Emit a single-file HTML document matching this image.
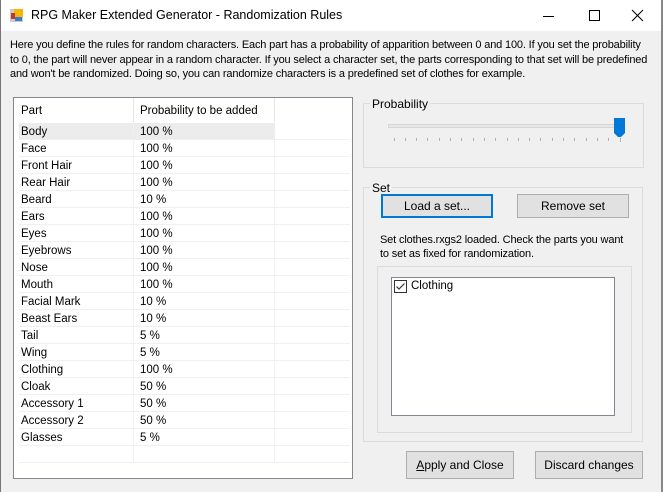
<!DOCTYPE html>
<html><head><meta charset="utf-8"><style>
*{margin:0;padding:0;box-sizing:border-box}
body{width:663px;height:492px;background:#f0f0f0;font-family:"Liberation Sans",sans-serif;font-size:11.5px;color:#000;position:relative;overflow:hidden}
.a{position:absolute}
.t{white-space:nowrap}
.btn{position:absolute;background:#e1e1e1;border:1px solid #adadad;text-align:center;font-size:12px}
.grp{position:absolute;border:1px solid #dcdcdc}
.gl{position:absolute;background:#f0f0f0;padding:0 2px;font-size:12px}
.row{position:absolute;left:19px;width:331px;height:17px;border-bottom:1px solid #f0f0f0}
.row span{position:absolute;top:3px}
</style></head><body>
<div class="a" style="left:0;top:0;width:663px;height:31px;background:#fff"></div>
<div class="a" style="left:0;top:0;width:1px;height:492px;background:#777"></div>
<div class="a" style="left:661px;top:0;width:2px;height:492px;background:#888"></div>
<svg class="a" style="left:10px;top:9px" width="13" height="13"><rect x="0" y="0" width="13" height="13" fill="#ccc"/><rect x="4" y="0" width="9" height="8" fill="#f5b800"/><rect x="1" y="4" width="4" height="6" fill="#c0392b"/><rect x="5" y="8" width="7" height="4" fill="#3a7bd5"/></svg>
<div class="a t" style="left:31px;top:8px;font-size:12.5px">RPG Maker Extended Generator - Randomization Rules</div>
<svg class="a" style="left:540px;top:9px" width="110" height="14"><line x1="3" y1="7.5" x2="14" y2="7.5" stroke="#000"/><rect x="49.5" y="1.5" width="10" height="10" fill="none" stroke="#000"/><line x1="92" y1="1" x2="103" y2="12" stroke="#000"/><line x1="103" y1="1" x2="92" y2="12" stroke="#000"/></svg>
<div class="a t" style="left:10px;top:38px;line-height:14.5px;font-size:11px;letter-spacing:-0.16px">Here you define the rules for random characters. Each part has a probability of apparition between 0 and 100. If you set the probability<br>to 0, the part will never appear in a random character. If you select a character set, the parts corresponding to that set will be predefined<br>and won't be randomized. Doing so, you can randomize characters is a predefined set of clothes for example.</div>

<div class="a" style="left:13px;top:97px;width:340px;height:382px;background:#fff;border:1px solid #828790"></div>
<div class="a t" style="left:21px;top:105px">Part</div>
<div class="a t" style="left:140px;top:105px">Probability to be added</div>
<div class="a" style="left:133px;top:98px;width:1px;height:24px;background:#e5e5e5"></div>
<div class="a" style="left:274px;top:98px;width:1px;height:24px;background:#e5e5e5"></div>
<div class="a" style="left:19px;top:123px;width:255px;height:16px;background:#ececec"></div>
<div id="rows"></div>
<div class="a" style="left:133px;top:123px;width:1px;height:339px;background:#f0f0f0"></div>
<div class="a" style="left:274px;top:123px;width:1px;height:339px;background:#f0f0f0"></div>
<script>
var d=[["Body","100 %"],["Face","100 %"],["Front Hair","100 %"],["Rear Hair","100 %"],["Beard","10 %"],["Ears","100 %"],["Eyes","100 %"],["Eyebrows","100 %"],["Nose","100 %"],["Mouth","100 %"],["Facial Mark","10 %"],["Beast Ears","10 %"],["Tail","5 %"],["Wing","5 %"],["Clothing","100 %"],["Cloak","50 %"],["Accessory 1","50 %"],["Accessory 2","50 %"],["Glasses","5 %"],["",""],["",""]];
var h="";for(var i=0;i<d.length;i++){h+='<div class="row" style="top:'+(123+17*i)+'px"><span style="left:2px">'+d[i][0]+'</span><span style="left:121px">'+d[i][1]+'</span></div>';}
document.getElementById("rows").innerHTML=h;
</script>

<div class="grp" style="left:363px;top:103px;width:281px;height:65px"></div>
<div class="gl t" style="left:370px;top:97px">Probability</div>
<div class="a" style="left:388px;top:124px;width:232px;height:4px;background:#e7e7e7;border:1px solid #d6d6d6"></div>
<svg class="a" style="left:614px;top:118px" width="12" height="20"><path d="M0 0H11V15L7 19H4L0 15Z" fill="#0078d7"/></svg>
<svg class="a" style="left:388px;top:137px" width="240" height="6" id="tk"></svg>
<script>
var s="";for(var i=0;i<21;i++){var x=5.5+i*11.3;x=Math.round(x)+0.5;s+='<line x1="'+x+'" y1="1" x2="'+x+'" y2="'+(i==20?5:4)+'" stroke="#b0b0b0"/>';}
document.getElementById("tk").innerHTML=s;
</script>

<div class="grp" style="left:363px;top:187px;width:280px;height:255px"></div>
<div class="gl t" style="left:370px;top:181px">Set</div>
<div class="btn" style="left:381px;top:194px;width:112px;height:24px;border:2px solid #0078d7;line-height:20px">Load a set...</div>
<div class="btn" style="left:517px;top:194px;width:112px;height:24px;line-height:22px">Remove set</div>
<div class="a t" style="left:380px;top:233px;line-height:14px;font-size:11px;letter-spacing:-0.15px">Set clothes.rxgs2 loaded. Check the parts you want<br>to set as fixed for randomization.</div>
<div class="grp" style="left:377px;top:266px;width:255px;height:167px"></div>
<div class="a" style="left:391px;top:277px;width:224px;height:139px;background:#fff;border:1px solid #828790"></div>
<svg class="a" style="left:394px;top:280px" width="13" height="13"><rect x="0.5" y="0.5" width="12" height="12" fill="#fff" stroke="#333"/><path d="M2.5 6.5L5 9L10.5 3.5" fill="none" stroke="#333" stroke-width="1.2"/></svg>
<div class="a t" style="left:411px;top:280px">Clothing</div>

<div class="btn" style="left:406px;top:451px;width:108px;height:28px;line-height:26px"><u>A</u>pply and Close</div>
<div class="btn" style="left:535px;top:451px;width:108px;height:28px;line-height:26px">Discard changes</div>
</body></html>
